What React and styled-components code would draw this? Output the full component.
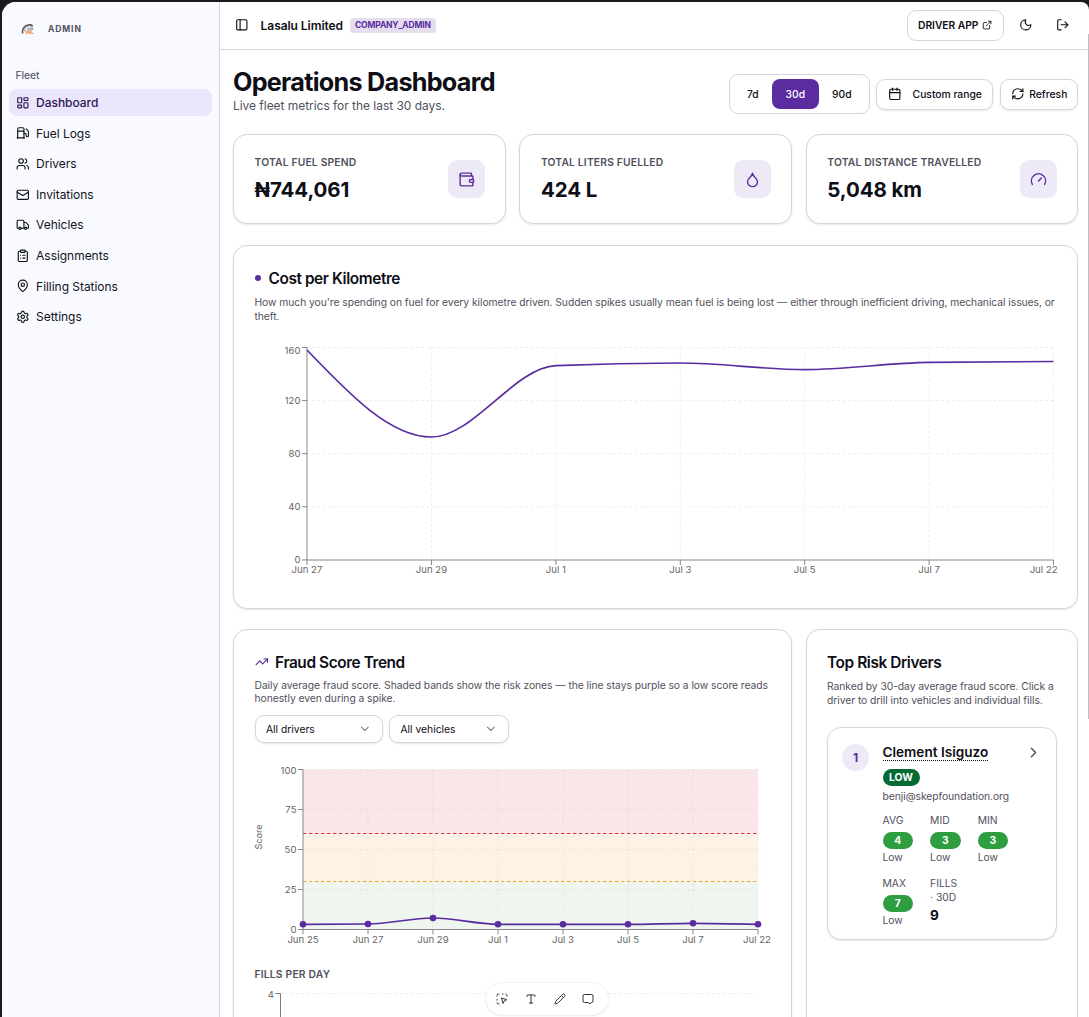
// Operations dashboard for the fleet admin
// sidebar on the left, header + metric cards + charts on the right

import React from 'react';
import styled, { createGlobalStyle } from 'styled-components';
import {
  LayoutDashboard,
  Fuel,
  Users,
  Mail,
  Truck,
  ClipboardList,
  MapPin,
  Settings,
  PanelLeft,
  ExternalLink,
  Moon,
  LogOut,
  Calendar,
  RefreshCw,
  Wallet,
  Droplet,
  Gauge,
  TrendingUp,
  ChevronDown,
  ChevronRight,
  Type,
  Pencil,
} from 'lucide-react';

const purple = '#5a2ca0';
const ink = '#0e0e16';
const muted = '#51515d';
const line = '#d6d5de';
const tint = '#ede9f7';

const GlobalStyle = createGlobalStyle`
  * {
    box-sizing: border-box;
  }
  body {
    margin: 0;
    background: #1c1a1c;
    color: ${ink};
    font-family: Inter, 'Liberation Sans', sans-serif;
  }
  h1, h2, p {
    margin: 0;
  }
  button {
    font-family: inherit;
    color: inherit;
    margin: 0;
  }
  svg {
    flex-shrink: 0;
  }
`;

const Frame = styled.div`
  height: 1017px;
  padding: 2px 0 0 2px;
  overflow: hidden;
`;

const Shell = styled.div`
  position: relative;
  display: flex;
  height: 1015px;
  overflow: hidden;
  background: #fff;
  border-radius: 14px 8px 0 0;
`;

const Sidebar = styled.aside`
  flex: 0 0 218px;
  padding: 0 7px;
  background: #f9faff;
  border-right: 1px solid ${line};
`;

const Brand = styled.div`
  display: flex;
  align-items: center;
  gap: 13px;
  height: 53px;
  padding-left: 12px;
  color: #4f505c;
  font-size: 8.5px;
  font-weight: 700;
  letter-spacing: 0.9px;
`;

const GroupLabel = styled.div`
  height: 27px;
  margin-top: 7px;
  padding: 0 6.5px;
  line-height: 27px;
  font-size: 10.3px;
  font-weight: 500;
  letter-spacing: -0.05px;
  color: #5d5f6c;
`;

const Nav = styled.nav`
  display: flex;
  flex-direction: column;
  gap: 3.4px;
`;

const NavItem = styled.a`
  display: flex;
  align-items: center;
  gap: 6.5px;
  height: 27.2px;
  padding: 0 7px;
  border-radius: 8px;
  font-size: 12px;
  letter-spacing: -0.04px;
  font-weight: ${({ $active }) => ($active ? 500 : 400)};
  color: ${({ $active }) => ($active ? '#2c1653' : '#11131c')};
  background: ${({ $active }) => ($active ? '#ece6fd' : 'transparent')};
`;

const Main = styled.main`
  flex: 1;
  min-width: 0;
`;

const TopBar = styled.header`
  display: flex;
  align-items: center;
  height: 48px;
  padding: 0 19px 1px 15px;
  border-bottom: 1px solid ${line};
`;

const Company = styled.span`
  margin: 0 7px 0 12px;
  font-size: 12px;
  font-weight: 600;
  letter-spacing: -0.06px;
`;

const Role = styled.span`
  height: 15px;
  padding: 0 5px;
  border-radius: 4px;
  line-height: 15px;
  font-size: 8.5px;
  font-weight: 700;
  letter-spacing: -0.17px;
  color: ${purple};
  background: #e5deef;
`;

const TopActions = styled.div`
  display: flex;
  align-items: center;
  margin-left: auto;
`;

const DriverApp = styled.button`
  display: flex;
  align-items: center;
  justify-content: center;
  gap: 4px;
  width: 97px;
  height: 31px;
  margin-right: 15px;
  padding: 0;
  border: 1px solid ${line};
  border-radius: 9px;
  background: #fff;
  font-size: 10.3px;
  font-weight: 600;
  letter-spacing: -0.05px;
`;

const Content = styled.div`
  padding: 14px 11px 0 13px;
`;

const PageHead = styled.div`
  display: flex;
  align-items: center;
  justify-content: space-between;
  height: 60px;
`;

const Heading = styled.div`
  margin-bottom: 10px;
`;

const PageTitle = styled.h1`
  line-height: 34px;
  font-size: 25.2px;
  font-weight: 700;
  letter-spacing: -0.73px;
`;

const PageNote = styled.p`
  line-height: 17px;
  margin-top: -2px;
  font-size: 12px;
  letter-spacing: -0.04px;
  color: ${muted};
`;

const Filters = styled.div`
  display: flex;
  align-items: center;
  gap: 6.6px;
  font-size: 10.3px;
  font-weight: 500;
`;

const Segments = styled.div`
  display: flex;
  width: 141px;
  height: 40px;
  padding: 4px;
  border: 1px solid ${line};
  border-radius: 9px;
`;

const Segment = styled.button`
  width: ${({ $width }) => $width}px;
  padding: 0;
  border: 0;
  border-radius: 8px;
  font-size: 10.3px;
  font-weight: 500;
  color: ${({ $on }) => ($on ? '#fff' : ink)};
  background: ${({ $on }) => ($on ? purple : 'transparent')};
`;

const OutlineButton = styled.button`
  display: flex;
  align-items: center;
  justify-content: center;
  gap: ${({ $gap }) => $gap}px;
  width: ${({ $width }) => $width}px;
  height: 31px;
  padding: 0;
  border: 1px solid ${line};
  border-radius: 9px;
  background: #fff;
  box-shadow: 0 1px 2px rgba(20, 18, 40, 0.1);
  font-size: 10.3px;
  font-weight: 500;
`;

const Card = styled.section`
  border: 1px solid ${line};
  border-radius: 14px;
  background: #fff;
  box-shadow: 0 1px 2px rgba(20, 18, 40, 0.1);
`;

const Stats = styled.div`
  display: grid;
  grid-template-columns: 273px 273px 1fr;
  gap: 13.4px;
  margin-top: 10px;
`;

const StatCard = styled(Card)`
  display: flex;
  align-items: center;
  justify-content: space-between;
  height: 90px;
  padding: 0 20px 0 20.5px;
`;

const StatLabel = styled.p`
  line-height: 14px;
  font-size: 10.3px;
  font-weight: 600;
  letter-spacing: 0.18px;
  color: ${muted};
`;

const StatValue = styled.p`
  margin-top: 7px;
  line-height: 27px;
  font-size: 20.5px;
  font-weight: 700;
  letter-spacing: -0.1px;
`;

const StatIcon = styled.div`
  display: flex;
  align-items: center;
  justify-content: center;
  width: 37.5px;
  height: 38px;
  border-radius: 9px;
  color: ${purple};
  background: ${tint};
`;

const CostCard = styled(Card)`
  height: 364px;
  margin-top: 21px;
  padding: 20px 20px 0 20.5px;
`;

const CardTitle = styled.h2`
  display: flex;
  align-items: center;
  gap: ${({ $gap }) => $gap || 7}px;
  height: 24px;
  font-size: 15.4px;
  font-weight: 600;
  letter-spacing: -0.41px;
`;

const Dot = styled.i`
  width: 6px;
  height: 6px;
  border-radius: 50%;
  background: ${purple};
`;

const CardNote = styled.p`
  margin-top: ${({ $top }) => $top || 0}px;
  line-height: ${({ $leading }) => $leading}px;
  font-size: 10.3px;
  letter-spacing: -0.046px;
  color: ${muted};
`;

const Chart = styled.svg`
  display: block;
  margin-top: ${({ $top }) => $top || 0}px;
  margin-left: -21.5px;
  overflow: visible;
  font-size: 9.6px;
  fill: #666;
`;

const Columns = styled.div`
  display: grid;
  grid-template-columns: 559px 1fr;
  gap: 14px;
  margin-top: 20px;
`;

const TrendCard = styled(Card)`
  height: 500px;
  padding: 20px 20px 0 20.5px;
`;

const Selects = styled.div`
  display: flex;
  gap: 6px;
  margin-top: 10px;
`;

const Select = styled.button`
  display: flex;
  align-items: center;
  justify-content: space-between;
  width: ${({ $width }) => $width}px;
  height: 28px;
  padding: 0 10px 0 10.5px;
  border: 1px solid ${line};
  border-radius: 9px;
  background: #fff;
  box-shadow: 0 1px 2px rgba(20, 18, 40, 0.1);
  font-size: 10.3px;
  svg {
    color: #85858c;
  }
`;

const RiskCard = styled(Card)`
  height: 500px;
  padding: 20px 20px 0 20px;
`;

const DriverCard = styled(Card)`
  display: flex;
  height: 213px;
  margin-top: 20px;
  padding: 16px 14px 0 14px;
`;

const Rank = styled.div`
  flex: 0 0 27px;
  height: 27px;
  margin-right: 13.5px;
  border-radius: 50%;
  line-height: 27px;
  text-align: center;
  font-size: 12px;
  font-weight: 700;
  color: ${purple};
  background: ${tint};
`;

const DriverInfo = styled.div`
  flex: 1;
`;

const DriverHead = styled.div`
  display: flex;
  justify-content: space-between;
  align-items: flex-start;
`;

const DriverName = styled.span`
  height: 17px;
  line-height: 17px;
  border-bottom: 1px dotted ${ink};
  font-size: 13.6px;
  font-weight: 600;
  letter-spacing: 0;
`;

const RiskTag = styled.div`
  width: 37px;
  height: 17px;
  margin-top: 7px;
  border-radius: 9px;
  line-height: 17px;
  text-align: center;
  font-size: 10.3px;
  font-weight: 700;
  color: #fff;
  background: #056b35;
`;

const Email = styled.p`
  margin-top: 3px;
  line-height: 15px;
  font-size: 10.3px;
  letter-spacing: -0.05px;
  color: ${muted};
`;

const Scores = styled.div`
  display: grid;
  grid-template-columns: repeat(3, 34px);
  gap: 12px 13.6px;
  margin-top: 9px;
  line-height: 14px;
  font-size: 10.3px;
  color: ${muted};
`;

const Pill = styled.div`
  width: 30.5px;
  height: 17px;
  margin: 5px 0 1px;
  border-radius: 9px;
  line-height: 17px;
  text-align: center;
  font-weight: 700;
  color: #fff;
  background: #2f9e41;
`;

const FillCount = styled.div`
  margin-top: 2px;
  line-height: 18px;
  font-size: 13.6px;
  font-weight: 700;
  color: ${ink};
`;

const SectionLabel = styled.p`
  margin-top: 14px;
  line-height: 14px;
  font-size: 10.3px;
  font-weight: 600;
  letter-spacing: 0.2px;
  color: ${muted};
`;

// floating annotation tools, sits over the page
const Tools = styled.div`
  position: absolute;
  left: 484px;
  top: 981px;
  display: flex;
  align-items: center;
  justify-content: space-between;
  width: 122px;
  height: 32px;
  padding: 0 13.5px 0 10px;
  border-radius: 16px;
  background: #fff;
  box-shadow: 0 0 2px rgba(0, 0, 0, 0.12), 0 1px 3px rgba(0, 0, 0, 0.06);
  color: #333;
`;

const ScrollThumb = styled.div`
  position: absolute;
  right: 0;
  top: 32px;
  width: 1px;
  height: 685px;
  background: #bfbfc3;
`;

const navItems = [
  ['Dashboard', LayoutDashboard],
  ['Fuel Logs', Fuel],
  ['Drivers', Users],
  ['Invitations', Mail],
  ['Vehicles', Truck],
  ['Assignments', ClipboardList],
  ['Filling Stations', MapPin],
  ['Settings', Settings],
];

const stats = [
  ['TOTAL FUEL SPEND', '₦744,061', Wallet],
  ['TOTAL LITERS FUELLED', '424 L', Droplet],
  ['TOTAL DISTANCE TRAVELLED', '5,048 km', Gauge],
];

const scores = [
  ['AVG', 4],
  ['MID', 3],
  ['MIN', 3],
  ['MAX', 7],
];

// monotone cubic through the points, same tangents as d3's curveMonotoneX
const monotone = (pts) => {
  const n = pts.length;
  const slope = (i) => (pts[i + 1][1] - pts[i][1]) / (pts[i + 1][0] - pts[i][0]);
  const t = pts.map((p, i) => {
    if (i === 0 || i === n - 1) return null;
    const a = slope(i - 1);
    const b = slope(i);
    const h0 = p[0] - pts[i - 1][0];
    const h1 = pts[i + 1][0] - p[0];
    const m = (a * h1 + b * h0) / (h0 + h1);
    return (Math.sign(a) + Math.sign(b)) * Math.min(Math.abs(a), Math.abs(b), 0.5 * Math.abs(m)) || 0;
  });
  t[0] = (3 * slope(0) - t[1]) / 2;
  t[n - 1] = (3 * slope(n - 2) - t[n - 2]) / 2;
  let d = `M${pts[0]}`;
  for (let i = 1; i < n; i++) {
    const [x0, y0] = pts[i - 1];
    const [x1, y1] = pts[i];
    const dx = (x1 - x0) / 3;
    d += `C${x0 + dx},${y0 + dx * t[i - 1]},${x1 - dx},${y1 - dx * t[i]},${x1},${y1}`;
  }
  return d;
};

const LogoMark = () => (
  <svg width="14" height="14" viewBox="0 0 14 14" fill="none">
    <path d="M1.6 11.5C.9 7 3.3 3.4 8 2.8c1.7-.2 3 .4 3.7 1.4" stroke="#6a5a5f" strokeWidth="1.8" />
    <path d="M3.2 9.5c0-3 2-4.6 4.8-4.8" stroke="#c4b5b5" strokeWidth="1.3" />
    <path d="M5.5 8c1-2 3-3 5.5-2.6v3H5.5z" fill="#9fbfdc" />
    <path d="M9.5 4c1.4.5 2.3 1.8 2.3 4" stroke="#6d8bb0" />
    <path d="M4.5 8.8l1.3 2.5 1.4-2.5 1 2.3 1.5-2.3v2.6h2.8" stroke="#f5a06c" strokeWidth="1.3" />
  </svg>
);

const CostChart = () => {
  const xs = [52.5, 177, 301.4, 425.8, 550.2, 674.6, 799];
  const labels = ['Jun 27', 'Jun 29', 'Jul 1', 'Jul 3', 'Jul 5', 'Jul 7', 'Jul 22'];
  const ys = [27.5, 80.6, 133.7, 186.8, 239.9];
  const values = [30, 117, 45.7, 43, 49.6, 42.4, 41.5];
  return (
    <Chart width="823" height="270" $top={-3}>
      <g transform="translate(21.5 0)">
        <g stroke="#ededf0" strokeDasharray="2.6 2.6">
          {ys.slice(0, 4).map((y) => <line key={y} x1="52.5" x2="799" y1={y} y2={y} />)}
          {xs.slice(1).map((x) => <line key={x} x1={x} x2={x} y1="27.5" y2="240" />)}
        </g>
        <g stroke="#7a7a7a" strokeWidth="0.9">
          <path d="M52.5 27.5V240H799" fill="none" />
          {ys.map((y) => <line key={y} x1="47.5" x2="52.5" y1={y} y2={y} />)}
          {xs.map((x) => <line key={x} x1={x} x2={x} y1="240" y2="245" />)}
        </g>
        {ys.map((y, i) => (
          <text key={y} x="46" y={i ? y + 3.5 : y + 6.5} textAnchor="end">{160 - i * 40}</text>
        ))}
        {labels.map((l, i) => (
          <text key={l} x={i === 6 ? 803 : xs[i]} y="253" textAnchor={i === 6 ? 'end' : 'middle'}>{l}</text>
        ))}
        <path d={monotone(xs.map((x, i) => [x, values[i]]))} fill="none" stroke={purple} strokeWidth="1.7" />
      </g>
    </Chart>
  );
};

const TrendChart = () => {
  const xs = [48.5, 113.5, 178.5, 243.5, 308.5, 373.5, 438.5, 503.5];
  const labels = ['Jun 25', 'Jun 27', 'Jun 29', 'Jul 1', 'Jul 3', 'Jul 5', 'Jul 7', 'Jul 22'];
  const ys = [26.5, 66.5, 106.5, 146.5, 186.5];
  const values = [181.3, 181, 175, 181.3, 181.3, 181.3, 180.3, 181.3];
  const points = xs.map((x, i) => [x, values[i]]);
  return (
    <Chart width="540" height="210">
      <g transform="translate(21.5 0)">
        <rect x="48.5" y="26.5" width="455" height="64" fill="#fae6e8" />
        <rect x="48.5" y="90.5" width="455" height="48" fill="#fdf2e3" />
        <rect x="48.5" y="138.5" width="455" height="48" fill="#eff6f0" />
        <g stroke="#000" strokeOpacity="0.06" strokeDasharray="2.6 2.6">
          {ys.slice(0, 4).map((y) => <line key={y} x1="48.5" x2="503.5" y1={y} y2={y} />)}
          {xs.slice(1).map((x) => <line key={x} x1={x} x2={x} y1="26.5" y2="186.5" />)}
        </g>
        <line x1="48.5" x2="503.5" y1="90.5" y2="90.5" stroke="#d92f4c" strokeDasharray="3.4 2.6" />
        <line x1="48.5" x2="503.5" y1="138.5" y2="138.5" stroke="#f0a52e" strokeDasharray="3.4 2.6" />
        <g stroke="#7d7d7d" strokeWidth="0.9">
          <path d="M48.5 26.5V186.5H503.5" fill="none" />
          {ys.map((y) => <line key={y} x1="43.5" x2="48.5" y1={y} y2={y} />)}
          {xs.map((x) => <line key={x} x1={x} x2={x} y1="186.5" y2="191.5" />)}
        </g>
        {ys.map((y, i) => (
          <text key={y} x="42" y={i ? y + 3.5 : y + 4.5} textAnchor="end">{100 - i * 25}</text>
        ))}
        {labels.map((l, i) => (
          <text key={l} x={i === 7 ? 502.5 : xs[i]} y="200" textAnchor="middle">{l}</text>
        ))}
        <text transform="translate(7.5 94) rotate(-90)" textAnchor="middle" fontSize="9">Score</text>
        <path d={monotone(points)} fill="none" stroke={purple} strokeWidth="1.7" />
        {points.map(([x, y]) => <circle key={x} cx={x} cy={y} r="3.3" fill={purple} />)}
      </g>
    </Chart>
  );
};

const FillsChart = () => (
  <Chart width="540" height="60">
    <g transform="translate(21.5 0)">
      <line x1="26" x2="503" y1="12.5" y2="12.5" stroke="#ededf0" strokeDasharray="2.6 2.6" />
      <path d="M21 12.5H26V60" fill="none" stroke="#7d7d7d" />
      <text x="19.5" y="17" textAnchor="end">4</text>
    </g>
  </Chart>
);

export default function App() {
  return (
    <Frame>
      <GlobalStyle />
      <Shell>
        <Sidebar>
          <Brand><LogoMark />ADMIN</Brand>
          <GroupLabel>Fleet</GroupLabel>
          <Nav>
            {navItems.map(([label, Icon], i) => (
              <NavItem key={label} $active={i === 0}>
                <Icon size={13.6} />
                {label}
              </NavItem>
            ))}
          </Nav>
        </Sidebar>

        <Main>
          <TopBar>
            <PanelLeft size={13.6} />
            <Company>Lasalu Limited</Company>
            <Role>COMPANY_ADMIN</Role>
            <TopActions>
              <DriverApp>DRIVER APP <ExternalLink size={10.2} /></DriverApp>
              <Moon size={13.6} />
              <LogOut size={13.6} style={{ marginLeft: 24 }} />
            </TopActions>
          </TopBar>

          <Content>
            <PageHead>
              <Heading>
                <PageTitle>Operations Dashboard</PageTitle>
                <PageNote>Live fleet metrics for the last 30 days.</PageNote>
              </Heading>
              <Filters>
                <Segments>
                  <Segment $width={38}>7d</Segment>
                  <Segment $width={47} $on>30d</Segment>
                  <Segment $width={46}>90d</Segment>
                </Segments>
                <OutlineButton $width={117} $gap={11}><Calendar size={13.6} />Custom range</OutlineButton>
                <OutlineButton $width={78} $gap={5}><RefreshCw size={13.6} />Refresh</OutlineButton>
              </Filters>
            </PageHead>

            <Stats>
              {stats.map(([label, value, Icon]) => (
                <StatCard key={label}>
                  <div>
                    <StatLabel>{label}</StatLabel>
                    <StatValue>{value}</StatValue>
                  </div>
                  <StatIcon><Icon size={17} /></StatIcon>
                </StatCard>
              ))}
            </Stats>

            <CostCard>
              <CardTitle $gap={8}><Dot />Cost per Kilometre</CardTitle>
              <CardNote $top={5} $leading={14}>
                How much you're spending on fuel for every kilometre driven. Sudden spikes usually mean fuel is being
                lost — either through inefficient driving, mechanical issues, or theft.
              </CardNote>
              <CostChart />
            </CostCard>

            <Columns>
              <TrendCard>
                <CardTitle><TrendingUp size={13.6} color={purple} />Fraud Score Trend</CardTitle>
                <CardNote $top={5} $leading={13}>
                  Daily average fraud score. Shaded bands show the risk zones — the line stays purple so a low score
                  reads honestly even during a spike.
                </CardNote>
                <Selects>
                  <Select $width={128.5}>All drivers<ChevronDown size={13.6} /></Select>
                  <Select $width={120}>All vehicles<ChevronDown size={13.6} /></Select>
                </Selects>
                <TrendChart />
                <SectionLabel>FILLS PER DAY</SectionLabel>
                <FillsChart />
              </TrendCard>

              <RiskCard>
                <CardTitle>Top Risk Drivers</CardTitle>
                <CardNote $top={5} $leading={14}>
                  Ranked by 30-day average fraud score. Click a driver to drill into vehicles and individual fills.
                </CardNote>
                <DriverCard>
                  <Rank>1</Rank>
                  <DriverInfo>
                    <DriverHead>
                      <DriverName>Clement Isiguzo</DriverName>
                      <ChevronRight size={17} color="#51515d" />
                    </DriverHead>
                    <RiskTag style={{ marginTop: 8 }}>LOW</RiskTag>
                    <Email>benji@skepfoundation.org</Email>
                    <Scores>
                      {scores.map(([label, value]) => (
                        <div key={label}>
                          {label}
                          <Pill>{value}</Pill>
                          Low
                        </div>
                      ))}
                      <div>
                        FILLS<br />· 30D
                        <FillCount>9</FillCount>
                      </div>
                    </Scores>
                  </DriverInfo>
                </DriverCard>
              </RiskCard>
            </Columns>
          </Content>
        </Main>

        <ScrollThumb />
        <Tools>
          <svg width="12" height="12" viewBox="0 0 24 24" fill="none" stroke="currentColor" strokeWidth="2">
            <path d="M2 7V5a3 3 0 0 1 3-3h2M12 2h3M19 2a3 3 0 0 1 3 3v2M2 12v3M2 19a3 3 0 0 0 3 3h2" />
            <path d="M11 10l3 11 2.5-5 5-2.5z" strokeLinejoin="round" />
          </svg>
          <Type size={12} />
          <Pencil size={12} />
          <svg width="12" height="12" viewBox="0 0 24 24" fill="none" stroke="currentColor" strokeWidth="2">
            <path d="M5 3h14a3 3 0 0 1 3 3v10a3 3 0 0 1-3 3h-1l-2 3-4-3H5a3 3 0 0 1-3-3V6a3 3 0 0 1 3-3z" strokeLinejoin="round" />
          </svg>
        </Tools>
      </Shell>
    </Frame>
  );
}
